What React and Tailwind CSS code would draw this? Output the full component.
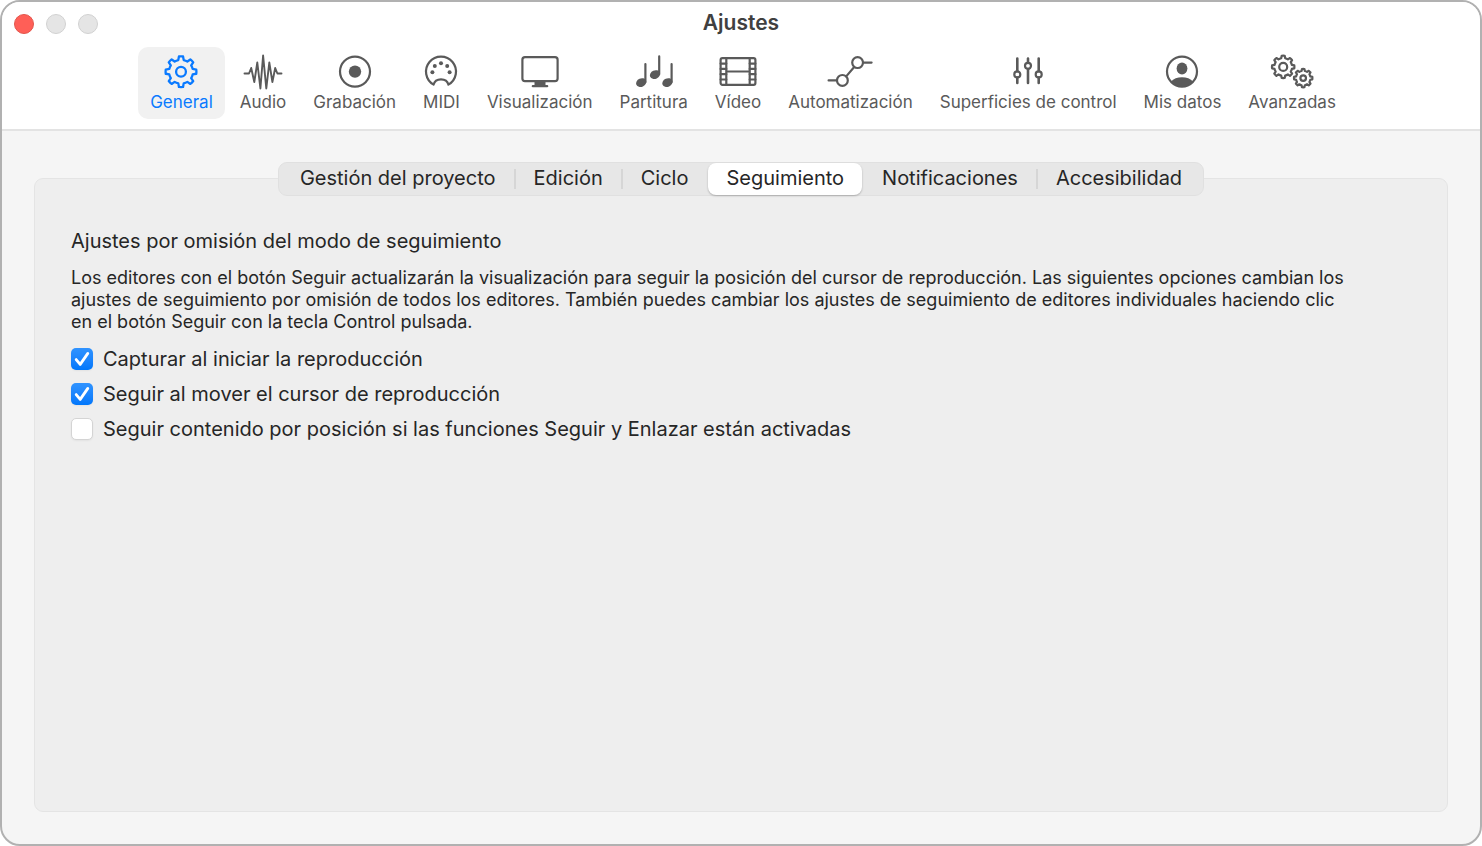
import React, { useState } from 'react';

// Outline of a cog: flat teeth joined by arcs along the root circle
function gearPath(cx, cy, outer, root, teeth) {
    const step = (Math.PI * 2) / teeth;
    const at = (r, a) => `${(cx + r * Math.sin(a)).toFixed(2)} ${(cy - r * Math.cos(a)).toFixed(2)}`;
    let d = '';
    for (let i = 0; i < teeth; i++) {
        const a = i * step;
        d += `${i === 0 ? 'M' : `A${root} ${root} 0 0 1 `}${at(root, a - step * 0.29)}`;
        d += `L${at(outer, a - step * 0.17)}`;
        d += `A${outer} ${outer} 0 0 1 ${at(outer, a + step * 0.17)}`;
        d += `L${at(root, a + step * 0.29)}`;
    }
    return `${d}A${root} ${root} 0 0 1 ${at(root, -step * 0.29)}Z`;
}

function Icon({ children, width = 36 }) {
    return (
        <svg
            width={width}
            height="36"
            viewBox={`0 0 ${width} 36`}
            fill="none"
            stroke="currentColor"
            strokeWidth="2.2"
            strokeLinecap="round"
            strokeLinejoin="round"
            aria-hidden="true"
        >
            {children}
        </svg>
    );
}

const GeneralIcon = () => (
    <Icon>
        <path d={gearPath(18, 17.7, 15.4, 12, 8)} strokeWidth="2.3" />
        <circle cx="18" cy="17.7" r="4.9" strokeWidth="2.3" />
    </Icon>
);

const AudioIcon = () => (
    <Icon width={40}>
        <path d="M1.5 19.5H6L8.2 14L11.3 28L14.3 8.5L17.4 34.5L20.1 1.5L23.3 34.5L26.3 8.5L29.4 28L32.2 14L34.4 19.5H38.5" strokeWidth="1.9" />
    </Icon>
);

const RecordIcon = () => (
    <Icon>
        <circle cx="18" cy="17.6" r="15" />
        <circle cx="18" cy="17.6" r="6.2" fill="currentColor" stroke="none" />
    </Icon>
);

const MidiIcon = () => (
    <Icon>
        <path d="M10.6 30.6A15 15 0 1 1 25.4 30.6C24.6 27.4 21.8 25.3 18 25.3S11.4 27.4 10.6 30.6Z" />
        <g fill="currentColor" stroke="none">
            <circle cx="18" cy="9.3" r="2" />
            <circle cx="11.8" cy="12" r="2" />
            <circle cx="24.2" cy="12" r="2" />
            <circle cx="9.4" cy="18.2" r="2" />
            <circle cx="26.6" cy="18.2" r="2" />
        </g>
    </Icon>
);

const DisplayIcon = () => (
    <Icon width={40}>
        <rect x="2.4" y="3.2" width="35.2" height="24" rx="2.6" />
        <path d="M14.5 27.5H25.5V32H14.5Z" fill="currentColor" stroke="none" />
        <path d="M12.8 32.2H27.2" />
    </Icon>
);

const ScoreIcon = () => (
    <Icon width={40}>
        <path d="M11.4 10V28M25.2 2.4V20M37.6 10V28" />
        <g fill="currentColor" stroke="none">
            <ellipse cx="7.2" cy="28.6" rx="5.3" ry="4.2" transform="rotate(-24 7.2 28.6)" />
            <ellipse cx="21" cy="20.6" rx="5.3" ry="4.2" transform="rotate(-24 21 20.6)" />
            <ellipse cx="33.4" cy="28.6" rx="5.3" ry="4.2" transform="rotate(-24 33.4 28.6)" />
        </g>
    </Icon>
);

const VideoIcon = () => (
    <Icon width={40}>
        <rect x="2.6" y="4.2" width="34.8" height="26.6" rx="1.8" />
        <path d="M8.3 4.2V30.8M31.7 4.2V30.8M8.3 17.5H31.7" />
        <path d="M2.6 9.6H8.3M2.6 14.9H8.3M2.6 20.2H8.3M2.6 25.5H8.3M31.7 9.6H37.4M31.7 14.9H37.4M31.7 20.2H37.4M31.7 25.5H37.4" />
    </Icon>
);

const AutomationIcon = () => (
    <Icon width={46}>
        <path d="M1.6 26.4H9.8M19.2 22.4L27.2 13M36.4 8.6H44.6" />
        <circle cx="15.4" cy="26.4" r="5.4" />
        <circle cx="30.6" cy="8.6" r="5.4" />
    </Icon>
);

const SurfacesIcon = () => (
    <Icon>
        <path d="M7.3 4.5V17.2M7.3 23.6V29M18 4.5V8.6M18 15V29M28.7 4.5V17.2M28.7 23.6V29" strokeWidth="2.6" />
        <circle cx="7.3" cy="20.4" r="3" />
        <circle cx="18" cy="11.8" r="3" />
        <circle cx="28.7" cy="20.4" r="3" />
    </Icon>
);

const UserIcon = () => (
    <Icon>
        <circle cx="18" cy="17.6" r="15" />
        <g fill="currentColor" stroke="none">
            <ellipse cx="18" cy="14.4" rx="5.4" ry="6" />
            <path d="M7 27.6C9.4 24.6 13.4 23.2 18 23.2S26.6 24.6 29 27.6A15 15 0 0 1 7 27.6Z" />
        </g>
    </Icon>
);

const AdvancedIcon = () => (
    <Icon width={46}>
        <path d={gearPath(14.2, 12.9, 11.2, 8.9, 8)} />
        <circle cx="14.2" cy="12.9" r="4" />
        <path d={gearPath(34.2, 24.1, 9.2, 7.3, 8)} />
        <circle cx="34.2" cy="24.1" r="2.8" />
    </Icon>
);

const sections = [
    { name: 'General', icon: GeneralIcon },
    { name: 'Audio', icon: AudioIcon },
    { name: 'Grabación', icon: RecordIcon },
    { name: 'MIDI', icon: MidiIcon },
    { name: 'Visualización', icon: DisplayIcon },
    { name: 'Partitura', icon: ScoreIcon },
    { name: 'Vídeo', icon: VideoIcon },
    { name: 'Automatización', icon: AutomationIcon },
    { name: 'Superficies de control', icon: SurfacesIcon },
    { name: 'Mis datos', icon: UserIcon },
    { name: 'Avanzadas', icon: AdvancedIcon },
];

const tabs = ['Gestión del proyecto', 'Edición', 'Ciclo', 'Seguimiento', 'Notificaciones', 'Accesibilidad'];

function Checkbox({ id, label, checked, onChange }) {
    return (
        <div className="flex items-center gap-2.5">
            <span className="relative flex size-[22px]">
                <input
                    id={id}
                    type="checkbox"
                    checked={checked}
                    onChange={onChange}
                    className="size-[22px] appearance-none rounded-[5px] border border-[#d4d4d4] bg-white shadow-xs checked:border-transparent checked:bg-linear-to-b checked:from-[#2f93ff] checked:to-[#0077fb] checked:bg-origin-border"
                />
                {checked && (
                    <svg className="pointer-events-none absolute inset-0" width="22" height="22" viewBox="0 0 22 22" fill="none" stroke="white" strokeWidth="2.8" strokeLinecap="round" strokeLinejoin="round" aria-hidden="true">
                        <path d="M5.2 11.6L9.2 16.4L16.8 5.4" />
                    </svg>
                )}
            </span>
            <label htmlFor={id} className="pt-0.5 text-[20px] leading-[33px]">
                {label}
            </label>
        </div>
    );
}

function App() {
    const [section, setSection] = useState('General');
    const [tab, setTab] = useState('Seguimiento');
    const [options, setOptions] = useState([
        { id: 'catch-start', label: 'Capturar al iniciar la reproducción', checked: true },
        { id: 'catch-move', label: 'Seguir al mover el cursor de reproducción', checked: true },
        { id: 'catch-content', label: 'Seguir contenido por posición si las funciones Seguir y Enlazar están activadas', checked: false },
    ]);

    const toggle = (id) => {
        setOptions(options.map((o) => (o.id === id ? { ...o, checked: !o.checked } : o)));
    };

    const activeTab = tabs.indexOf(tab);

    return (
        <div className="flex min-h-screen flex-col overflow-hidden rounded-[20px] border-2 border-[#b1b1b1] bg-[#f5f5f5] font-['Inter',sans-serif] text-[#262626]">
            <header className="border-b-2 border-[#e3e3e3] bg-white pb-2.5">
                {/* Title bar */}
                <div className="mb-px grid h-11 grid-cols-3 items-center px-3">
                    <div className="flex gap-3">
                        <button aria-label="Cerrar" className="size-5 rounded-full border border-[#e2554c] bg-[#ff5f57]" />
                        <button aria-label="Minimizar" className="size-5 rounded-full border border-[#d1d1d1] bg-[#e5e5e5]" />
                        <button aria-label="Ampliar" className="size-5 rounded-full border border-[#d1d1d1] bg-[#e5e5e5]" />
                    </div>
                    <h1 className="pb-0.5 text-center text-[21px] leading-6 font-semibold text-[#404040]">Ajustes</h1>
                </div>

                {/* Toolbar */}
                <nav className="flex justify-center gap-[3px] pl-1">
                    {sections.map(({ name, icon: SectionIcon }) => (
                        <button
                            key={name}
                            onClick={() => setSection(name)}
                            className={`flex h-[72px] flex-col items-center rounded-[10px] px-3 pt-[7px] text-[17px] leading-6 whitespace-nowrap ${section === name ? 'bg-[#f1f1f1] text-[#0a7aff]' : 'text-[#5a5a5a]'}`}
                        >
                            <SectionIcon />
                            {name}
                        </button>
                    ))}
                </nav>
            </header>

            <main className="flex grow flex-col px-8 pt-[31px] pb-8">
                {/* Tabs */}
                <div role="tablist" className="z-10 flex h-[34px] items-stretch self-center rounded-[9px] border border-[#e0e0e0] bg-[#e7e7e7] px-[3px]">
                    {tabs.map((name, i) => (
                        <React.Fragment key={name}>
                            {i > 0 && (
                                <span className={`h-5 w-0.5 self-center ${i === activeTab || i === activeTab + 1 ? '' : 'bg-[#d6d6d6]'}`} />
                            )}
                            <button
                                role="tab"
                                aria-selected={tab === name}
                                onClick={() => setTab(name)}
                                className={`rounded-[8px] px-[18px] pb-0.5 text-[20px] leading-6 whitespace-nowrap ${tab === name ? 'bg-white shadow-[0_1px_2px_rgba(0,0,0,0.25)]' : ''}`}
                            >
                                {name}
                            </button>
                        </React.Fragment>
                    ))}
                </div>

                {/* Tab content */}
                <section className="-mt-[18px] grow rounded-[9px] border border-[#e4e4e4] bg-[#eeeeee] px-9 pt-[46px]">
                    <h2 className="text-[20px] leading-8">Ajustes por omisión del modo de seguimiento</h2>
                    <p className="mt-2.5 mb-2 max-w-[1285px] text-[18px] leading-[22px]">
                        Los editores con el botón Seguir actualizarán la visualización para seguir la posición del cursor de reproducción. Las siguientes opciones cambian los ajustes de seguimiento por omisión de todos los editores. También puedes cambiar los ajustes de seguimiento de editores individuales haciendo clic en el botón Seguir con la tecla Control pulsada.
                    </p>
                    {options.map((o) => (
                        <Checkbox key={o.id} id={o.id} label={o.label} checked={o.checked} onChange={() => toggle(o.id)} />
                    ))}
                </section>
            </main>
        </div>
    );
}

export default App;
